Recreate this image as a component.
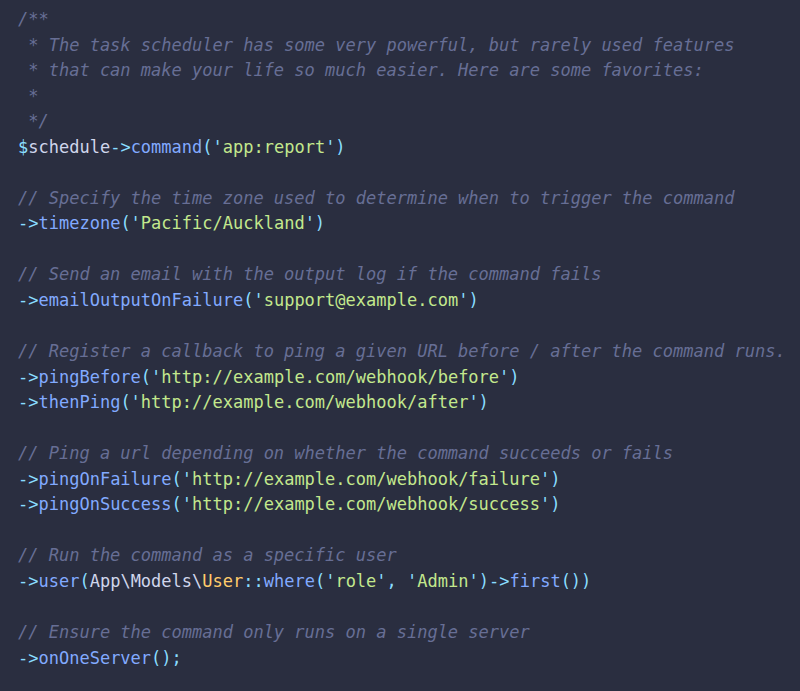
import React from 'react';

type Tok = [string, string];

const C = 'text-[#676e95] italic';
const S = 'text-[#c3e88d]';
const F = 'text-[#82aaff]';
const P = 'text-[#89ddff]';
const T = 'text-[#d0d6ec]';
const Y = 'text-[#ffcb6b]';

const lines: Tok[][] = [
  [[C, '/**']],
  [[C, ' * The task scheduler has some very powerful, but rarely used features']],
  [[C, ' * that can make your life so much easier. Here are some favorites:']],
  [[C, ' *']],
  [[C, ' */']],
  [[P, '$'], [T, 'schedule'], [P, '->'], [F, 'command'], [P, "('"], [S, 'app:report'], [P, "')"]],
  [],
  [[C, '// Specify the time zone used to determine when to trigger the command']],
  [[P, '->'], [F, 'timezone'], [P, "('"], [S, 'Pacific/Auckland'], [P, "')"]],
  [],
  [[C, '// Send an email with the output log if the command fails']],
  [[P, '->'], [F, 'emailOutputOnFailure'], [P, "('"], [S, 'support@example.com'], [P, "')"]],
  [],
  [[C, '// Register a callback to ping a given URL before / after the command runs.']],
  [[P, '->'], [F, 'pingBefore'], [P, "('"], [S, 'http://example.com/webhook/before'], [P, "')"]],
  [[P, '->'], [F, 'thenPing'], [P, "('"], [S, 'http://example.com/webhook/after'], [P, "')"]],
  [],
  [[C, '// Ping a url depending on whether the command succeeds or fails']],
  [[P, '->'], [F, 'pingOnFailure'], [P, "('"], [S, 'http://example.com/webhook/failure'], [P, "')"]],
  [[P, '->'], [F, 'pingOnSuccess'], [P, "('"], [S, 'http://example.com/webhook/success'], [P, "')"]],
  [],
  [[C, '// Run the command as a specific user']],
  [
    [P, '->'], [F, 'user'], [P, '('], [T, 'App\\Models\\'], [Y, 'User'], [P, '::'], [F, 'where'],
    [P, "('"], [S, 'role'], [P, "', '"], [S, 'Admin'], [P, "')->"], [F, 'first'], [P, '())'],
  ],
  [],
  [[C, '// Ensure the command only runs on a single server']],
  [[P, '->'], [F, 'onOneServer'], [P, '();']],
];

export default function App() {
  return (
    <div className="w-[800px] h-[691px] overflow-hidden bg-[#2a2e40] pl-[18px] pt-[7px]">
      <pre className="font-['DejaVu_Sans_Mono',monospace] text-[17px] leading-[25.56px] whitespace-pre">
        {lines.map((line, i) => (
          <div key={i} className="h-[25.56px]">
            {line.map(([cls, txt], j) => (
              <span key={j} className={cls}>
                {txt}
              </span>
            ))}
          </div>
        ))}
      </pre>
    </div>
  );
}
